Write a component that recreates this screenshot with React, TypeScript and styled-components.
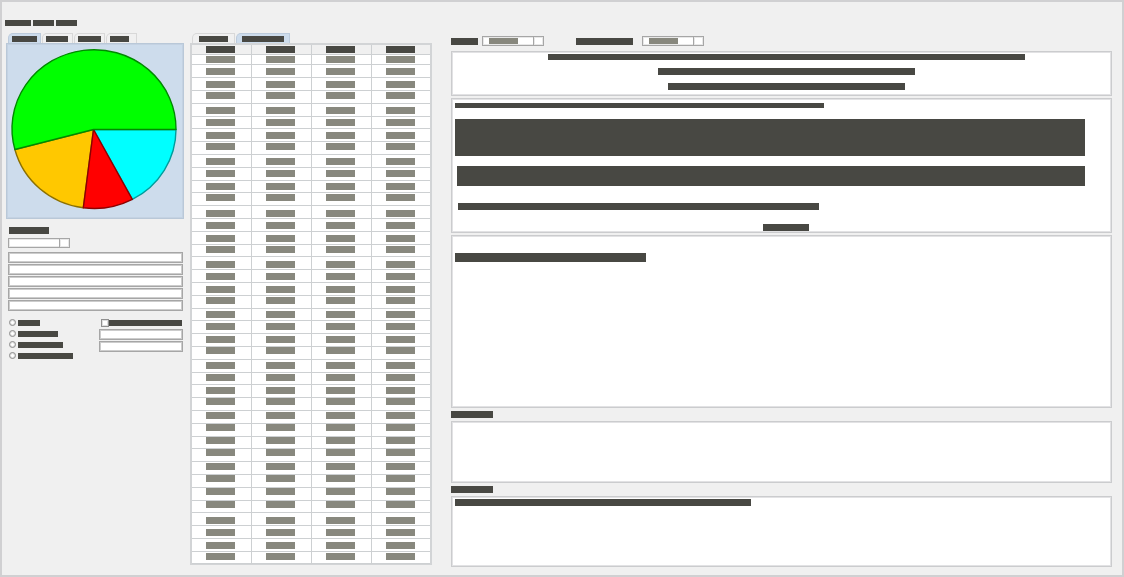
import React from "react";
import styled, { createGlobalStyle } from "styled-components";

const INK = "#484843";
const MUTED = "#88887e";
const LINE = "#d2d4d6";
const FIELD = "#a6a6a6";
const BLUE = "#cddcec";

const GlobalStyle = createGlobalStyle`
  * { box-sizing: border-box; }
  body { margin: 0; background: #f0f0f0; font-family: "Liberation Sans", sans-serif; }
`;

const Page = styled.div`
  min-height: 100vh;
  padding: 18px 10px 8px 3px;
  border: 2px solid #d0d0d2;
  background: #f0f0f0;
`;

const Bar = styled.span<{ $w?: number; $h?: number; $muted?: boolean }>`
  display: block;
  flex: none;
  width: ${(p) => (p.$w ? `${p.$w}px` : "auto")};
  max-width: 100%;
  height: ${(p) => p.$h ?? 7}px;
  background: ${(p) => (p.$muted ? MUTED : INK)};
`;

const Menu = styled.nav`
  display: flex;
  gap: 2px;
`;

const MenuButton = styled.button`
  padding: 0;
  border: 0;
  background: none;
`;

const Workspace = styled.main`
  display: grid;
  grid-template-columns: 178px 248px minmax(0, 1fr);
  align-items: start;
  margin-top: 7px;
  padding-left: 1px;
`;

const Sidebar = styled.section``;

const Records = styled.section`
  padding-left: 6px;
`;

const Details = styled.section`
  display: flex;
  flex-direction: column;
  margin-left: 19px;
  padding-top: 3px;
`;

const Tabs = styled.div`
  display: flex;
  gap: 1px;
  padding-left: 2px;
`;

const Tab = styled.button<{ $active?: boolean; $pad: number }>`
  display: flex;
  align-items: flex-start;
  justify-content: flex-start;
  min-width: 31px;
  height: 10px;
  padding: 2px ${(p) => p.$pad}px 0;
  border: 1px solid ${(p) => (p.$active ? "#bccbdc" : "#d8d8d8")};
  border-bottom: 0;
  border-radius: 5px 0 0 0;
  background: ${(p) => (p.$active ? BLUE : "#f0f0f0")};
`;

const ChartPanel = styled.div`
  border: 1px solid #b9c8d8;
  box-shadow: inset 0 0 0 1px #c4d2e2;
  background: ${BLUE};
  svg { display: block; width: 100%; }
`;

const Form = styled.form`
  display: flex;
  flex-direction: column;
  padding: 8px 1px 0 2px;
`;

const FormLabel = styled.label`
  padding-left: 1px;
`;

const Stack = styled.div`
  display: flex;
  flex-direction: column;
  gap: 1px;
  margin-top: 4px;
`;

const TextInput = styled.input`
  display: block;
  width: 100%;
  height: 11px;
  padding: 0;
  border: 1px solid ${FIELD};
  box-shadow: inset 0 0 0 1px #cccccc;
  background: #fff;
  font-size: 8px;
`;

const ComboBox = styled.div`
  display: grid;
  grid-template-columns: minmax(0, 1fr) 11px;
  flex: none;
  align-items: center;
  width: 62px;
  height: 10px;
`;

const Select = styled.select`
  grid-area: 1 / 1 / 2 / 3;
  appearance: none;
  width: 100%;
  height: 10px;
  padding: 0;
  border: 1px solid ${FIELD};
  border-radius: 0;
  box-shadow: inset 0 0 0 1px #e8e8e8;
  background: #fff;
  font-size: 8px;
`;

const ComboValue = styled.span`
  grid-area: 1 / 1;
  width: 29px;
  height: 6px;
  margin-left: 7px;
  background: ${MUTED};
  pointer-events: none;
`;

const ComboArrow = styled.span`
  grid-area: 1 / 2;
  height: 10px;
  border: 1px solid ${FIELD};
  box-shadow: inset 0 0 0 1px #e8e8e8;
  pointer-events: none;
`;

const Options = styled.div`
  display: flex;
  justify-content: space-between;
  margin-top: 8px;
`;

const RadioList = styled.div`
  display: grid;
  grid-auto-rows: 7px;
  gap: 4px;
  padding-left: 1px;
`;

const Choice = styled.label`
  display: flex;
  align-items: center;
  gap: 2px;
`;

const Radio = styled.input`
  appearance: none;
  width: 7px;
  height: 7px;
  margin: 0;
  border: 1px solid #888888;
  border-radius: 50%;
  box-shadow: inset 0 0 0 1px #dedede;
  background: #fff;
`;

const CheckBox = styled.input`
  appearance: none;
  width: 8px;
  height: 8px;
  margin: 0;
  border: 1px solid #909090;
  box-shadow: inset 0 0 0 1px #dedede;
  background: #fff;
`;

const CheckGroup = styled.div`
  display: flex;
  flex-direction: column;
  gap: 1px;
  width: 84px;
`;

const CheckChoice = styled(Choice)`
  gap: 0;
  padding-left: 2px;
  margin-bottom: 1px;
`;

const Table = styled.table`
  width: 100%;
  table-layout: fixed;
  border: solid ${LINE};
  border-width: 2px 2px 1px;
  border-collapse: separate;
  border-spacing: 0;
  background: #fff;
  line-height: 0;

  th, td {
    padding: 0 0 0 14px;
    vertical-align: top;
    border-bottom: 1px solid #cdd0d2;
    border-right: 1px solid #cdd0d2;
  }
  th { padding-top: 1px; background: #f0f0f0; }
  th:last-child, td:last-child { border-right: 0; }
`;

const Row = styled.tr<{ $h: number; $drop: number }>`
  height: ${(p) => p.$h}px;
  td { padding-top: ${(p) => p.$drop}px; }
`;

const Filters = styled.div`
  display: flex;
  align-items: center;
  margin-bottom: 5px;
`;

const Field = styled.div<{ $gap: number }>`
  display: flex;
  align-items: center;
  gap: ${(p) => p.$gap}px;
  margin-right: 32px;
`;

const Panel = styled.div<{ $h: number }>`
  display: flex;
  flex-direction: column;
  min-height: ${(p) => p.$h}px;
  padding: 2px 3px;
  border: 1px solid #cbccce;
  box-shadow: inset 0 0 0 1px #e2e2e4;
  background: #fff;
  & + & { margin-top: 2px; }
`;

const Heading = styled(Panel)`
  align-items: center;
  gap: 8px;
  padding-left: 12px;
`;

const Body = styled(Panel)`
  padding: 4px 26px 0 3px;
`;

const Notes = styled(Panel)`
  padding-top: 17px;
`;

const Block = styled(Bar)<{ $top: number; $indent?: number }>`
  margin: ${(p) => p.$top}px 0 0 ${(p) => p.$indent ?? 0}px;
`;

const ActionButton = styled.button`
  align-self: center;
  margin: 14px 0 0 32px;
  padding: 0;
  border: 0;
  background: none;
`;

const Caption = styled.label`
  display: block;
  padding: 3px 0;
`;

const TextArea = styled.textarea`
  display: block;
  width: 100%;
  padding: 2px 3px;
  border: 0;
  background: transparent;
  resize: none;
  flex: 1;
  font-size: 8px;
`;

/* Each batch of four records starts at its own height inside the ruled grid. */
const batchTops = [56, 107, 158, 210, 261, 311, 362, 412, 463, 517];
const batchSteps = [0, 12, 25, 36];

function rowHeight(i: number) {
  if (i === 0) return 10;
  return i % 5 === 0 || i === 39 ? 12 : 13;
}

function buildRows() {
  let top = 55;
  return Array.from({ length: 40 }, (_, i) => {
    const height = rowHeight(i);
    const barTop = batchTops[Math.floor(i / 4)] + batchSteps[i % 4];
    const drop = Math.min(height - 8, Math.max(0, barTop - top));
    top += height;
    return { height, drop };
  });
}

const rows = buildRows();
const columns = [0, 1, 2, 3];

function Combo({ id, value }: { id: string; value?: boolean }) {
  return (
    <ComboBox>
      <Select id={id} aria-label={id} />
      {value && <ComboValue />}
      <ComboArrow />
    </ComboBox>
  );
}

function Pie() {
  return (
    <svg viewBox="0 1 176 174" role="img" aria-label="Pie chart" strokeWidth="1.4" strokeLinejoin="round">
      <path d="M86.5 86.5 L169 86.5 A82 79 0 0 1 125.3 156.4 Z" fill="#00ffff" stroke="#009c9c" />
      <path d="M86.5 86.5 L76.3 164.8 A82 79 0 0 1 7.9 106.5 Z" fill="#ffc800" stroke="#8c7000" />
      <path d="M86.5 86.5 L125.3 156.4 A82 79 0 0 1 76.3 164.8 Z" fill="#ff0000" stroke="#8c0000" />
      <path d="M86.5 86.5 L7.9 106.5 A82 79 0 1 1 169 86.5 Z" fill="#00ff00" stroke="#008a00" />
    </svg>
  );
}

export default function App() {
  return (
    <>
      <GlobalStyle />
      <Page>
        <Menu>
          {[26, 21, 21].map((w, i) => (
            <MenuButton key={i} aria-label={`Menu ${i + 1}`}><Bar $w={w} $h={6} /></MenuButton>
          ))}
        </Menu>
        <Workspace>
          <Sidebar>
            <Tabs>
              {[25, 22, 23, 19].map((w, i) => (
                <Tab key={i} $pad={3} $active={i === 0} aria-label={`View ${i + 1}`}><Bar $w={w} $h={6} /></Tab>
              ))}
            </Tabs>
            <ChartPanel><Pie /></ChartPanel>
            <Form>
              <FormLabel htmlFor="category"><Bar $w={40} /></FormLabel>
              <Stack><Combo id="category" /></Stack>
              <Stack>
                {[1, 2, 3, 4, 5].map((n) => <TextInput key={n} aria-label={`Entry ${n}`} />)}
              </Stack>
              <Options>
                <RadioList>
                  {[22, 40, 45, 55].map((w, i) => (
                    <Choice key={i}>
                      <Radio type="radio" name="mode" aria-label={`Mode ${i + 1}`} />
                      <Bar $w={w} $h={6} />
                    </Choice>
                  ))}
                </RadioList>
                <CheckGroup>
                  <CheckChoice>
                    <CheckBox type="checkbox" aria-label="Range" />
                    <Bar $w={73} $h={6} />
                  </CheckChoice>
                  <TextInput aria-label="From" />
                  <TextInput aria-label="To" />
                </CheckGroup>
              </Options>
            </Form>
          </Sidebar>

          <Records>
            <Tabs>
              <Tab $pad={6} aria-label="Records 1"><Bar $w={29} $h={6} /></Tab>
              <Tab $pad={5} $active aria-label="Records 2"><Bar $w={42} $h={6} /></Tab>
            </Tabs>
            <Table>
              <colgroup>
                <col width="60" /><col width="60" /><col width="60" /><col width="58" />
              </colgroup>
              <thead>
                <Row $h={10} $drop={0}>
                  {columns.map((c) => <th key={c} scope="col"><Bar $w={29} /></th>)}
                </Row>
              </thead>
              <tbody>
                {rows.map((r, i) => (
                  <Row key={i} $h={r.height} $drop={r.drop}>
                    {columns.map((c) => <td key={c}><Bar $w={29} $muted /></td>)}
                  </Row>
                ))}
              </tbody>
            </Table>
          </Records>

          <Details>
            <Filters>
              <Field $gap={4}>
                <label htmlFor="type"><Bar $w={27} /></label>
                <Combo id="type" value />
              </Field>
              <Field $gap={9}>
                <label htmlFor="period"><Bar $w={57} /></label>
                <Combo id="period" value />
              </Field>
            </Filters>
            <Heading $h={45}>
              <Bar $w={477} $h={6} />
              <Bar $w={257} />
              <Bar $w={237} />
            </Heading>
            <Body $h={135}>
              <Bar $w={369} $h={5} />
              <Block $h={37} $top={11} />
              <Block $h={20} $top={10} $indent={2} />
              <Block $w={361} $top={17} $indent={3} />
              <ActionButton aria-label="Apply"><Bar $w={46} /></ActionButton>
            </Body>
            <Notes $h={173}>
              <Bar $w={191} $h={9} />
            </Notes>
            <Caption htmlFor="comment"><Bar $w={42} /></Caption>
            <Panel $h={62}><TextArea id="comment" /></Panel>
            <Caption htmlFor="result"><Bar $w={42} /></Caption>
            <Panel $h={71}>
              <Bar $w={296} />
              <TextArea id="result" />
            </Panel>
          </Details>
        </Workspace>
      </Page>
    </>
  );
}
